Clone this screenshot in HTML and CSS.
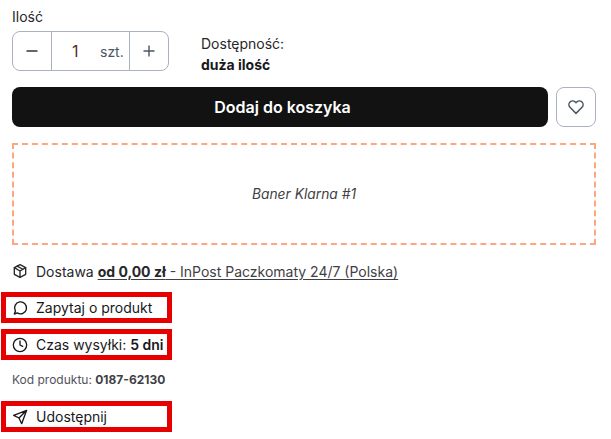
FILE: index.html
```html
<!DOCTYPE html>
<html lang="pl">
<head>
<meta charset="utf-8">
<title>Produkt</title>
<link rel="stylesheet" href="styles.css">
</head>
<body>
<main class="panel">
  <div class="qty-label">Ilość</div>
  <div class="qty-row">
    <div class="stepper">
      <button class="step-btn" aria-label="mniej"><svg width="14" height="14" viewBox="0 0 14 14"><path d="M1.5 7h11" stroke="#4b5563" stroke-width="1.8" fill="none"/></svg></button>
      <div class="step-value"><span class="num">1</span><span class="unit">szt.</span></div>
      <button class="step-btn" aria-label="więcej"><svg width="14" height="14" viewBox="0 0 14 14"><path d="M1.5 7h11M7 1.5v11" stroke="#4b5563" stroke-width="1.4" fill="none"/></svg></button>
    </div>
    <div class="avail">
      <div>Dostępność:</div>
      <strong>duża ilość</strong>
    </div>
  </div>
  <div class="buy-row">
    <button class="buy">Dodaj do koszyka</button>
    <button class="wish" aria-label="Ulubione">
      <svg width="18" height="18" viewBox="0 0 24 24" fill="none" stroke="#4b5563" stroke-width="2" stroke-linejoin="round"><path d="M12 20.5 4 12.4a5 5 0 0 1 0-7 5 5 0 0 1 7 0l1 1 1-1a5 5 0 0 1 7 0 5 5 0 0 1 0 7z"/></svg>
    </button>
  </div>
  <div class="banner">Baner Klarna #1</div>
  <div class="delivery">
    <svg class="ico" width="16" height="16" viewBox="0 0 24 24" fill="none" stroke="#27272a" stroke-width="2" stroke-linejoin="round" stroke-linecap="round"><path d="M12 2.5 20.5 7v10L12 21.5 3.5 17V7z"/><path d="M3.5 7 12 12l8.5-5M12 12v9.5M7.7 4.7l8.5 4.7"/></svg>
    <span class="delivery-text">Dostawa <span class="delivery-link"><b>od 0,00 zł</b> - InPost Paczkomaty 24/7 (Polska)</span></span>
  </div>
  <div class="mark first">
    <svg class="ico" width="16" height="16" viewBox="0 0 24 24" fill="none" stroke="#18181b" stroke-width="2" stroke-linejoin="round"><path d="M3.5 21l1.6-4.6A9 9 0 1 1 8 19.4z"/></svg>
    <span>Zapytaj o produkt</span>
  </div>
  <div class="mark second">
    <svg class="ico" width="16" height="16" viewBox="0 0 24 24" fill="none" stroke="#18181b" stroke-width="2" stroke-linecap="round" stroke-linejoin="round"><circle cx="12" cy="12" r="10"/><path d="M12 6v6l4 2"/></svg>
    <span>Czas wysyłki: <b>5 dni</b></span>
  </div>
  <div class="code">Kod produktu: <b>0187-62130</b></div>
  <div class="mark">
    <svg class="ico" width="16" height="16" viewBox="0 0 24 24" fill="none" stroke="#18181b" stroke-width="2" stroke-linecap="round" stroke-linejoin="round"><path d="M22 2 2.5 9.5l8 4 4 8.5zM22 2 10.5 13.5"/></svg>
    <span>Udostępnij</span>
  </div>
</main>
</body>
</html>
```
FILE: styles.css
```css
* { box-sizing: border-box; }
html, body { margin: 0; padding: 0; background: #fff; }
body { font-family: Inter, "Liberation Sans", sans-serif; color: #18181b; font-size: 14px; overflow: hidden; }
.panel { width: 611px; height: 439px; padding: 8px 15px 0 12px; }
.qty-label { font-size: 14px; line-height: 18px; color: #27272a; }
.qty-row { display: flex; height: 40px; margin-top: 5px; gap: 32px; }
.stepper { display: flex; width: 157px; height: 40px; border: 1px solid #abb2bf; border-radius: 8px; }
.step-btn { width: 38px; flex: none; padding: 0; border: 0; background: none; display: flex; align-items: center; justify-content: center; }
.step-value { flex: 1; display: flex; align-items: center; border-left: 1px solid #abb2bf; border-right: 1px solid #abb2bf; padding-left: 20px; }
.num { font-size: 16px; color: #5a2a1c; width: 28px; }
.unit { font-size: 14px; color: #4b5563; }
.avail { height: 40px; padding-top: 2px; font-size: 14px; line-height: 21px; color: #27272a; }
.avail strong { display: block; font-weight: 700; color: #18181b; font-size: 14px; }
.buy-row { display: flex; gap: 8px; margin-top: 16px; }
.buy { flex: 1; height: 40px; border: 0; border-radius: 8px; background: #121212; color: #fff; font: 600 16px Inter, sans-serif; padding: 0 0 0 5px; }
.wish { width: 40px; height: 40px; padding: 0; background: #fff; border: 1px solid #abb2bf; border-radius: 8px; display: flex; align-items: center; justify-content: center; }
.banner { height: 102px; margin-top: 16px; border: 2px dashed #ffa680; display: flex; align-items: center; justify-content: center; font-style: italic; font-size: 13.8px; color: #3f3f46; }
.delivery { display: flex; align-items: center; gap: 8px; height: 20px; margin-top: 16px; }
.delivery-text { color: #27272a; }
.delivery-link { text-decoration: underline; text-underline-offset: 2px; color: #3f3f46; }
.delivery-link b { font-weight: 700; color: #27272a; }
.ico { flex: none; }
.mark { display: flex; align-items: center; gap: 8px; width: 171px; height: 31px; margin-left: -11px; padding-left: 6px; border: 5px solid #e60000; white-space: nowrap; }
.mark.first { margin-top: 11px; }
.mark.second { margin-top: 6px; }
.mark b { font-weight: 600; }
.code { font-size: 12px; line-height: 16px; color: #52525b; margin: 12px 0 13px; }
.code b { font-weight: 700; color: #3f3f46; }
```
